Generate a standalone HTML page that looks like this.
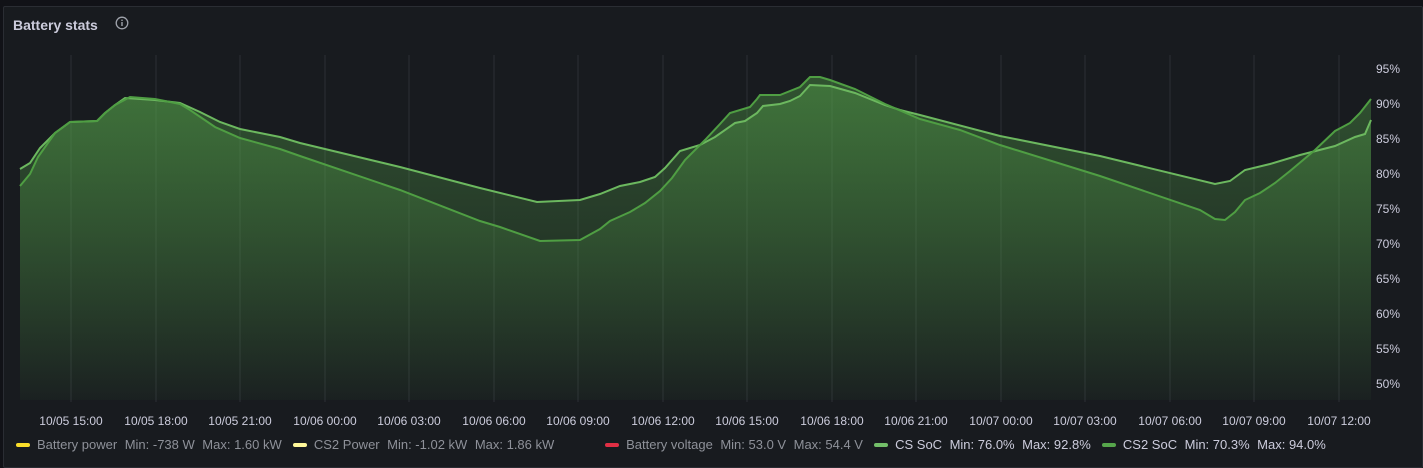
<!DOCTYPE html>
<html><head><meta charset="utf-8"><style>
body{margin:0;background:#111217;width:1423px;height:460px;overflow:hidden;font-family:"Liberation Sans",sans-serif;}
.panel{position:absolute;left:3px;top:6px;width:1418px;height:460px;background:#181b1f;border:1px solid #2a2d33;border-radius:2px;}
.title{position:absolute;left:9px;top:10px;color:#ccccdc;font-size:14px;font-weight:bold;}
.leg{position:absolute;top:437px;left:16px;font-size:13px;color:#8e9199;white-space:nowrap;}
.leg span{margin-right:7.5px}
.sw{display:inline-block;width:14px;height:4px;border-radius:2px;vertical-align:middle;margin:0 7px 2px 0}
.on{color:#ccccdc}
</style></head><body>
<div class="panel"><div class="title">Battery stats</div>
<svg style="position:absolute;left:111px;top:9px" width="14" height="14"><circle cx="7" cy="7" r="5.8" fill="none" stroke="#9fa3ab" stroke-width="1.3"/><rect x="6.3" y="6" width="1.4" height="4" fill="#9fa3ab"/><rect x="6.3" y="3.6" width="1.4" height="1.4" fill="#9fa3ab"/></svg>
</div>
<svg width="1423" height="460" style="position:absolute;left:0;top:0">
<defs><linearGradient id="g" x1="0" y1="60" x2="0" y2="400" gradientUnits="userSpaceOnUse"><stop offset="0" stop-color="#56a64b" stop-opacity="0.42"/><stop offset="1" stop-color="#56a64b" stop-opacity="0.02"/></linearGradient></defs>
<g stroke="#2c2f35" stroke-width="1">
<path d="M71 55V402M156 55V402M240 55V402M325 55V402M409 55V402M494 55V402M578 55V402M663 55V402M747 55V402M832 55V402M916 55V402M1001 55V402M1085 55V402M1170 55V402M1254 55V402M1339 55V402"/>
</g>
<path fill="url(#g)" d="M20 400L20 169L30 163L40 148L55 133L70 122L97 121L105 113L115 105L125 98L155 100L180 103L200 112L220 122L240 129L260 133L280 137L300 143L400 167L480 188L537 202L580 200L600 194L620 186L640 182L655 177L665 168L680 151L700 145L715 137L735 123L745 121L757 113L763 106L780 104L790 101L800 96L810 85L830 86L855 93L885 105L900 110L920 115L1000 136L1100 156L1215 184L1230 181L1245 170L1270 164L1300 155L1335 146L1355 137L1365 134L1371 120L1371 400Z"/>
<path fill="url(#g)" d="M20 400L20 186L30 174L38 157L55 133L70 122L97 121L105 113L115 105L130 97L155 99L180 104L190 110L215 127L240 138L280 149L300 156L400 190L480 221L500 227L540 241L580 240L600 229L610 221L630 212L645 203L660 191L672 178L685 160L705 140L720 124L730 113L750 107L757 99L760 95L780 95L800 87L810 77L820 77L830 80L855 89L885 104L920 119L960 130L1000 145L1100 176L1200 210L1215 219L1225 220L1235 212L1245 200L1260 193L1275 183L1290 171L1315 150L1335 131L1350 123L1360 113L1371 99L1371 400Z"/>
<path fill="none" stroke="#6cb85f" stroke-width="2" d="M20 169L30 163L40 148L55 133L70 122L97 121L105 113L115 105L125 98L155 100L180 103L200 112L220 122L240 129L260 133L280 137L300 143L400 167L480 188L537 202L580 200L600 194L620 186L640 182L655 177L665 168L680 151L700 145L715 137L735 123L745 121L757 113L763 106L780 104L790 101L800 96L810 85L830 86L855 93L885 105L900 110L920 115L1000 136L1100 156L1215 184L1230 181L1245 170L1270 164L1300 155L1335 146L1355 137L1365 134L1371 120"/>
<path fill="none" stroke="#4f9e43" stroke-width="2" d="M20 186L30 174L38 157L55 133L70 122L97 121L105 113L115 105L130 97L155 99L180 104L190 110L215 127L240 138L280 149L300 156L400 190L480 221L500 227L540 241L580 240L600 229L610 221L630 212L645 203L660 191L672 178L685 160L705 140L720 124L730 113L750 107L757 99L760 95L780 95L800 87L810 77L820 77L830 80L855 89L885 104L920 119L960 130L1000 145L1100 176L1200 210L1215 219L1225 220L1235 212L1245 200L1260 193L1275 183L1290 171L1315 150L1335 131L1350 123L1360 113L1371 99"/>
<g fill="#ccccdc" font-size="12" font-family="Liberation Sans,sans-serif">
<text x="1376" y="73">95%</text><text x="1376" y="108">90%</text><text x="1376" y="143">85%</text><text x="1376" y="178">80%</text><text x="1376" y="213">75%</text><text x="1376" y="248">70%</text><text x="1376" y="283">65%</text><text x="1376" y="318">60%</text><text x="1376" y="353">55%</text><text x="1376" y="388">50%</text>
<g text-anchor="middle">
<text x="71" y="425">10/05 15:00</text><text x="156" y="425">10/05 18:00</text><text x="240" y="425">10/05 21:00</text><text x="325" y="425">10/06 00:00</text><text x="409" y="425">10/06 03:00</text><text x="494" y="425">10/06 06:00</text><text x="578" y="425">10/06 09:00</text><text x="663" y="425">10/06 12:00</text><text x="747" y="425">10/06 15:00</text><text x="832" y="425">10/06 18:00</text><text x="916" y="425">10/06 21:00</text><text x="1001" y="425">10/07 00:00</text><text x="1085" y="425">10/07 03:00</text><text x="1170" y="425">10/07 06:00</text><text x="1254" y="425">10/07 09:00</text><text x="1339" y="425">10/07 12:00</text>
</g></g>
</svg>
<div class="leg"><i class="sw" style="background:#fade2a"></i><span>Battery power</span><span>Min: -738 W</span><span>Max: 1.60 kW</span> <i class="sw" style="background:#fff899"></i><span>CS2 Power</span><span>Min: -1.02 kW</span><span>Max: 1.86 kW</span>&nbsp;&nbsp;&nbsp;&nbsp;&nbsp;&nbsp;&nbsp;&nbsp;&nbsp;&nbsp;&nbsp; <i class="sw" style="background:#e02f44"></i><span>Battery voltage</span><span>Min: 53.0 V</span><span>Max: 54.4 V</span> <i class="sw" style="background:#73bf69"></i><span class="on">CS SoC</span><span class="on">Min: 76.0%</span><span class="on">Max: 92.8%</span> <i class="sw" style="background:#56a64b"></i><span class="on">CS2 SoC</span><span class="on">Min: 70.3%</span><span class="on">Max: 94.0%</span></div>
</body></html>
